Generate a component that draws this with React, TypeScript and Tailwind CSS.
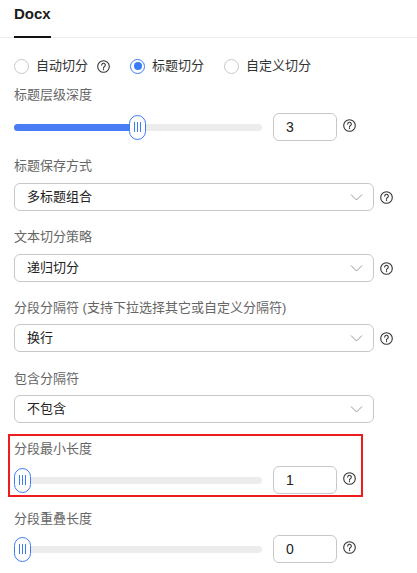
import React from "react";

const HelpIcon = ({ className = "" }: { className?: string }) => (
  <svg width="13" height="13" viewBox="0 0 13 13" className={className} fill="none">
    <circle cx="6.5" cy="6.5" r="5.8" stroke="#333" strokeWidth="1.1" />
    <path d="M4.7 5.1a1.8 1.8 0 1 1 2.6 1.6c-.5.3-.8.6-.8 1.2v.3" stroke="#333" strokeWidth="1.1" strokeLinecap="round" />
    <circle cx="6.5" cy="9.6" r="0.7" fill="#333" />
  </svg>
);

const Chevron = () => (
  <svg width="13" height="8" viewBox="0 0 13 8" fill="none">
    <path d="M1 1.5l5.5 5.5 5.5-5.5" stroke="#999" strokeWidth="1" />
  </svg>
);

const Label = ({ text, className = "" }: { text: string; className?: string }) => (
  <div className={`h-[20px] leading-[20px] text-[13px] text-[#666] ${className}`}>{text}</div>
);

const Select = ({ value, help = true, className = "" }: { value: string; help?: boolean; className?: string }) => (
  <div className={`flex items-center ${className}`}>
    <div className="flex h-[28px] w-[360px] items-center justify-between rounded-[6px] border border-[#c8c8c8] pl-[12px] pr-[10px]">
      <span className="text-[13px] text-[#222]">{value}</span>
      <Chevron />
    </div>
    {help && <HelpIcon className="ml-[6px]" />}
  </div>
);

const Slider = ({ value, left, className = "" }: { value: string; left: number; className?: string }) => (
  <div className={`flex items-center ${className}`}>
    <div className="relative h-[25px] w-[248px]">
      <div className="absolute left-0 right-0 top-[9px] h-[7px] rounded-full bg-[#ececec]" />
      <div
        className="absolute left-0 top-[9px] h-[7px] rounded-full bg-[#4a7df5]"
        style={{ width: left + 8 }}
      />
      <div
        className="absolute top-0 flex h-[25px] w-[17px] items-center justify-center gap-[2px] rounded-full border border-[#3b7cf5] bg-white"
        style={{ left }}
      >
        <span className="h-[10px] w-px bg-[#3b7cf5]" />
        <span className="h-[10px] w-px bg-[#3b7cf5]" />
        <span className="h-[10px] w-px bg-[#3b7cf5]" />
      </div>
    </div>
    <div className="ml-[11px] flex h-[28px] w-[64px] items-center rounded-[6px] border border-[#c8c8c8] pl-[12px] text-[14px] text-[#222]">
      {value}
    </div>
    <HelpIcon className="ml-[6px] -mt-[4px]" />
  </div>
);

const Radio = ({ label, checked }: { label: string; checked?: boolean }) => (
  <div className="flex items-center">
    <span
      className={`flex h-[15px] w-[15px] items-center justify-center rounded-full border ${
        checked ? "border-[#3b7cf5]" : "border-[#c8c8c8]"
      }`}
    >
      {checked && <span className="h-[8px] w-[8px] rounded-full bg-[#3b7cf5]" />}
    </span>
    <span className="ml-[7px] text-[13px] text-[#333]">{label}</span>
  </div>
);

export default function App() {
  return (
    <div className="h-[573px] w-[417px] bg-white font-['Liberation_Sans','Noto_Sans_CJK_SC',sans-serif]">
      <div className="flex items-end border-b border-[#eeeeee] pl-[14px]">
        <div className="-mb-px border-b-2 border-[#111] pb-[12px] pt-[4px] text-[15px] font-bold leading-[20px] text-[#1a1a1a]">
          Docx
        </div>
      </div>
      <div className="px-[14px]">
        <div className="mt-[18px] flex h-[20px] items-center">
          <Radio label="自动切分" />
          <HelpIcon className="ml-[9px]" />
          <div className="ml-[20px]">
            <Radio label="标题切分" checked />
          </div>
          <div className="ml-[20px]">
            <Radio label="自定义切分" />
          </div>
        </div>
        <Label text="标题层级深度" className="mt-[9px]" />
        <Slider value="3" left={115} className="mt-[8px]" />

        <Label text="标题保存方式" className="mt-[15px]" />
        <Select value="多标题组合" className="mt-[7px]" />

        <Label text="文本切分策略" className="mt-[16px]" />
        <Select value="递归切分" className="mt-[7px]" />

        <Label text="分段分隔符 (支持下拉选择其它或自定义分隔符)" className="mt-[16px]" />
        <Select value="换行" className="mt-[6px]" />

        <Label text="包含分隔符" className="mt-[17px]" />
        <Select value="不包含" help={false} className="mt-[6px]" />

        <div className="-ml-[6px] mt-[11px] w-[355px] border-2 border-[#ee1c1c] pb-[1px] pl-[4px] pt-[3px]">
          <Label text="分段最小长度" />
          <Slider value="1" left={0} className="mt-[7px]" />
        </div>

        <Label text="分段重叠长度" className="mt-[12px]" />
        <Slider value="0" left={0} className="mt-[6px]" />
      </div>
    </div>
  );
}
